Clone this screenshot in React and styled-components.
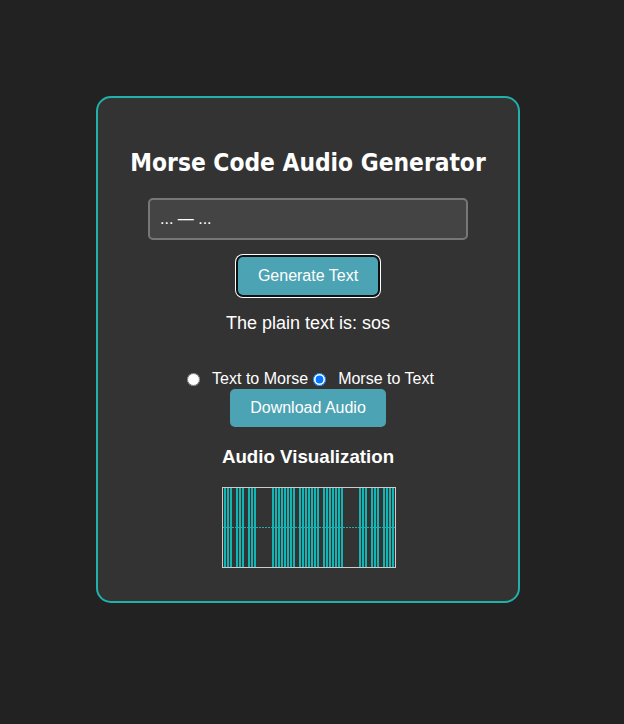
import React, { useState } from "react";
import styled, { createGlobalStyle } from "styled-components";

const GlobalStyle = createGlobalStyle`
  html, body {
    margin: 0;
    background: #222222;
    font-family: "Liberation Sans", Arial, sans-serif;
    color: #ffffff;
  }
`;

const Page = styled.div`
  padding: 96px 0 0 96px;
`;

const Card = styled.div`
  box-sizing: border-box;
  width: 424px;
  height: 507px;
  background: #333333;
  border: 2px solid #20b2aa;
  border-radius: 15px;
  padding: 51px 20px 0;
  display: flex;
  flex-direction: column;
  align-items: center;
`;

const Title = styled.h1`
  margin: 0;
  font-family: "DejaVu Sans Condensed", "DejaVu Sans", Verdana, sans-serif;
  font-stretch: condensed;
  font-size: 24.3px;
  line-height: 28px;
  font-weight: bold;
  white-space: nowrap;
`;

const Field = styled.input`
  box-sizing: border-box;
  width: 320px;
  height: 42px;
  margin-top: 21px;
  padding: 10px;
  background: #444444;
  border: 2px solid #777777;
  border-radius: 5px;
  color: #ffffff;
  font-family: "Liberation Sans", Arial, sans-serif;
  font-size: 16px;
  outline: none;
`;

const Button = styled.button`
  margin-top: ${(p) => p.$top}px;
  padding: 10px 20px;
  height: 38px;
  background: #4ca3b3;
  color: #ffffff;
  border: none;
  border-radius: 5px;
  font-family: "Liberation Sans", Arial, sans-serif;
  font-size: 16px;
  line-height: 18px;
  cursor: pointer;
  box-shadow: ${(p) => (p.$focused ? "0 0 0 2px #111111, 0 0 0 3px #ffffff" : "none")};
`;

const Result = styled.p`
  margin: 18px 0 0;
  font-size: 18px;
  line-height: 21px;
`;

const RadioRow = styled.div`
  margin-top: 36px;
  display: flex;
  align-items: center;
  font-size: 16px;
  line-height: 18px;
`;

const Radio = styled.input`
  width: 13px;
  height: 13px;
  margin: 0 12px 0 5px;
`;

const SubTitle = styled.h3`
  margin: 19px 0 0;
  font-size: 18.72px;
  line-height: 21px;
  font-weight: bold;
`;

const Viz = styled.svg`
  display: block;
  margin: 20px 0 0 2px;
  border: 1px solid #cccccc;
`;

const tones = [
  [0, 9], [12, 21], [24, 33],
  [48, 72], [75, 96], [99, 120],
  [135, 144], [147, 156], [159, 172],
];

const Waveform = () => {
  const bars = [];
  tones.forEach(([a, b], i) => {
    for (let x = a + 1; x < b; x += 3) {
      bars.push(<rect key={i + "-" + x} x={x} y={0} width={2} height={79} fill="#12b4b4" />);
    }
  });
  return (
    <Viz width="172" height="79" viewBox="0 0 172 79" shapeRendering="crispEdges">
      <line x1="0" y1="39.5" x2="172" y2="39.5" stroke="#2aa9a9" strokeWidth="1" strokeDasharray="2 1" />
      {bars}
    </Viz>
  );
};

export default function App() {
  const [mode, setMode] = useState("morse");
  return (
    <Page>
      <GlobalStyle />
      <Card>
        <Title>Morse Code Audio Generator</Title>
        <Field defaultValue="... — ..." />
        <Button $top={17} $focused>Generate Text</Button>
        <Result>The plain text is: sos</Result>
        <RadioRow>
          <Radio type="radio" name="mode" checked={mode === "text"} onChange={() => setMode("text")} />
          Text to Morse
          <Radio type="radio" name="mode" checked={mode === "morse"} onChange={() => setMode("morse")} />
          Morse to Text
        </RadioRow>
        <Button $top={1}>Download Audio</Button>
        <SubTitle>Audio Visualization</SubTitle>
        <Waveform />
      </Card>
    </Page>
  );
}
